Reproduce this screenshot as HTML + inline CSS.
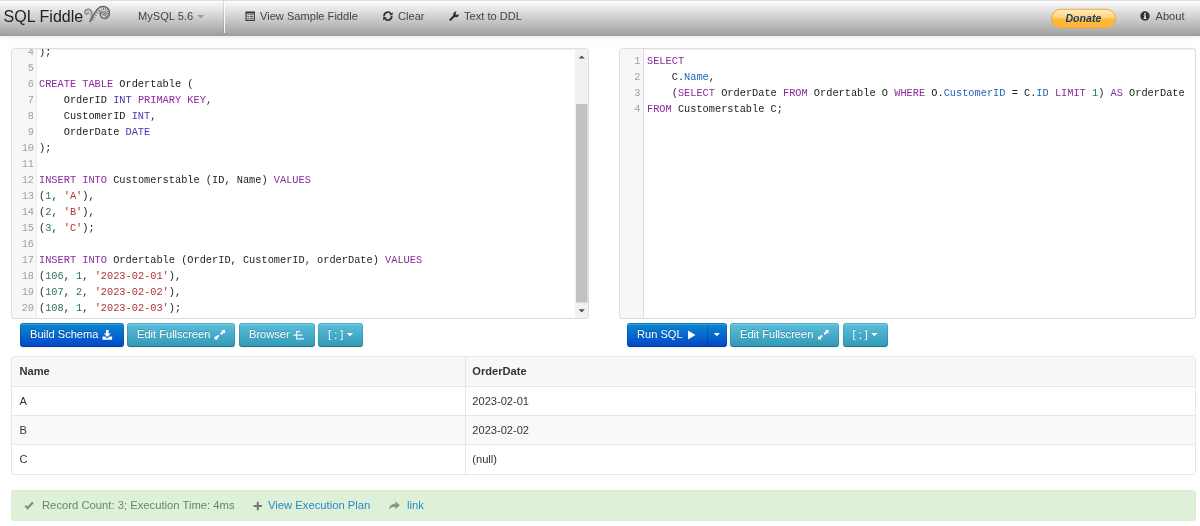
<!DOCTYPE html>
<html><head><meta charset="utf-8"><title>SQL Fiddle</title>
<style>
*{box-sizing:border-box}
html,body{margin:0;padding:0}
body{width:1200px;height:526px;overflow:hidden;background:#fff;font-family:"Liberation Sans",Arial,sans-serif;font-size:11.1px;color:#333;position:relative}
.abs{position:absolute}
svg{position:absolute;overflow:visible}
#nav{left:0;top:0;width:1200px;height:36px;background:linear-gradient(#fdfdfd 0,#f4f4f4 8%,#a8a8a8 90%,#9e9e9e 96%,#9e9e9e 100%);box-shadow:0 1px 6px rgba(0,0,0,.10);border-top:1px solid #dedede}
#nav .t{position:absolute;top:0;line-height:31px;color:#444;font-size:11.1px;white-space:nowrap}
#brand{left:3.600px;font-size:16.050px !important;color:#222 !important;line-height:31px !important}
.div{position:absolute;left:222.5px;top:0;width:2px;height:32px;border-left:1px solid rgba(0,0,0,.10);border-right:1px solid rgba(255,255,255,.9)}
.ed{border:1px solid #ddd;border-radius:3px;background:#fff;overflow:hidden;box-shadow:inset 0 1px 1px rgba(0,0,0,.05)}
.gut{position:absolute;left:0;top:0;bottom:0;width:24.5px;background:#f7f7f7;border-right:1px solid #ececec}
.code{position:absolute;font-family:"Liberation Mono",monospace;font-size:10.3px;line-height:16px;white-space:pre;color:#1c1c1c;margin:0}
.ln{color:#a0a0a0;text-align:right}
.k{color:#8a2a9c}.n{color:#2a7558}.s{color:#b03232}.b{color:#4436b4}.v{color:#1f66b4}
.btn{position:absolute;top:322.5px;height:24px;border-radius:3px;color:#fff;font-size:11.1px;line-height:22px;white-space:nowrap;border:1px solid rgba(0,0,0,.1);border-bottom-color:rgba(0,0,0,.25);text-shadow:0 -1px 0 rgba(0,0,0,.25);box-shadow:inset 0 1px 0 rgba(255,255,255,.2),0 1px 2px rgba(0,0,0,.05);background-origin:border-box}
.btn span{position:absolute;top:-1px}
.pri{background-image:linear-gradient(#0a8ad0,#0446c8)}
.inf{background-image:linear-gradient(#5bc0de,#3198b6)}
.row{position:absolute;left:0;width:100%;line-height:29px}
.row span{position:absolute;top:0}
#wrap{position:absolute;left:0;top:0;width:1200px;height:526px;will-change:transform}
</style></head><body><div id="wrap">
<div id="nav" class="abs">
 <div id="brand" class="t">SQL Fiddle</div>
 <div class="t" style="left:138px">MySQL 5.6</div>
 <div class="div"></div>
 <div class="t" style="left:260px">View Sample Fiddle</div>
 <div class="t" style="left:398px">Clear</div>
 <div class="t" style="left:464px">Text to DDL</div>
 <div class="t" style="left:1155.5px">About</div>
</div>

<div class="abs ed" style="left:11px;top:48px;width:578px;height:271px">
 <div class="gut"></div>
 <pre class="code ln" style="left:0;top:-5px;width:22px">4
5
6
7
8
9
10
11
12
13
14
15
16
17
18
19
20</pre>
 <pre class="code" style="left:27px;top:-5px">);

<span class="k">CREATE TABLE</span> Ordertable (
    OrderID <span class="b">INT</span> <span class="k">PRIMARY KEY</span>,
    CustomerID <span class="b">INT</span>,
    OrderDate <span class="b">DATE</span>
);

<span class="k">INSERT INTO</span> Customerstable (ID, Name) <span class="k">VALUES</span>
(<span class="n">1</span>, <span class="s">'A'</span>),
(<span class="n">2</span>, <span class="s">'B'</span>),
(<span class="n">3</span>, <span class="s">'C'</span>);

<span class="k">INSERT INTO</span> Ordertable (OrderID, CustomerID, orderDate) <span class="k">VALUES</span>
(<span class="n">106</span>, <span class="n">1</span>, <span class="s">'2023-02-01'</span>),
(<span class="n">107</span>, <span class="n">2</span>, <span class="s">'2023-02-02'</span>),
(<span class="n">108</span>, <span class="n">1</span>, <span class="s">'2023-02-03'</span>);</pre>
</div>

<div class="abs ed" style="left:619px;top:48px;width:577px;height:271px">
 <div class="gut" style="width:23.500px;border-right-color:#dedede"></div>
 <pre class="code ln" style="left:0;top:4px;width:20.5px">1
2
3
4</pre>
 <pre class="code" style="left:27px;top:4px"><span class="k">SELECT</span>
    C.<span class="v">Name</span>,
    (<span class="k">SELECT</span> OrderDate <span class="k">FROM</span> Ordertable O <span class="k">WHERE</span> O.<span class="v">CustomerID</span> = C.<span class="v">ID</span> <span class="k">LIMIT</span> <span class="n">1</span>) <span class="k">AS</span> OrderDate
<span class="k">FROM</span> Customerstable C;</pre>
</div>

<div class="btn pri" style="left:20px;width:103.5px"><span style="left:9px">Build Schema</span></div>
<div class="btn inf" style="left:127px;width:108px"><span style="left:9px">Edit Fullscreen</span></div>
<div class="btn inf" style="left:239px;width:75.5px"><span style="left:9px">Browser</span></div>
<div class="btn inf" style="left:318px;width:45px"><span style="left:9px">[ ; ]</span></div>
<div class="btn pri" style="left:627px;width:100px"><span style="left:9px">Run SQL</span><i class="abs" style="left:79px;top:0;width:1px;height:22px;background:rgba(0,0,0,.18)"></i></div>
<div class="btn inf" style="left:730px;width:108.500px"><span style="left:9px">Edit Fullscreen</span></div>
<div class="btn inf" style="left:842.5px;width:45px"><span style="left:9px">[ ; ]</span></div>

<div class="abs" style="left:11px;top:356px;width:1184.5px;height:118.5px;border:1px solid #e7e7e7;border-radius:3px;overflow:hidden">
 <div class="row" style="top:0;height:29.5px;background:#f8f8f8;border-bottom:1px solid #e7e7e7;font-weight:bold;line-height:29px"><span style="left:7.5px">Name</span><span style="left:460.3px">OrderDate</span></div>
 <div class="row" style="top:29.5px;height:29px;border-bottom:1px solid #e7e7e7;line-height:28px"><span style="left:7.5px">A</span><span style="left:460.3px">2023-02-01</span></div>
 <div class="row" style="top:58.5px;height:29.5px;background:#f9f9f9;border-bottom:1px solid #e7e7e7;line-height:28px"><span style="left:7.5px">B</span><span style="left:460.3px">2023-02-02</span></div>
 <div class="row" style="top:88px;height:29px;line-height:28px"><span style="left:7.5px">C</span><span style="left:460.3px">(null)</span></div>
 <div class="abs" style="left:452.5px;top:0;width:1px;height:120px;background:#e7e7e7"></div>
</div>

<div class="abs" style="left:11px;top:490px;width:1184.5px;height:31px;background:#dff0d8;border:1px solid #d9ecd0;border-radius:3px;color:#628a64;line-height:28px;font-size:11.25px">
 <span class="abs" style="left:30px">Record Count: 3; Execution Time: 4ms</span>
 <span class="abs" style="left:256px;color:#2a88c8">View Execution Plan</span>
 <span class="abs" style="left:395px;color:#2a88c8">link</span>
</div>

<svg class="abs" style="left:0;top:0" width="1200" height="526" viewBox="0 0 1200 526">
 <!-- logo -->
 <g fill="none" stroke-linecap="round">
  <path d="M90.3 21.2C91.6 17.5 92.8 13.6 91 10.9C89.2 8.5 85.2 9.3 85.1 12.1C85 14.3 87.6 14.7 88.3 13" stroke="#9a9a9a" stroke-width="2.3"/>
  <path d="M90.2 21.6C92.5 16.5 95.3 10.6 99.3 7.7C103.8 4.6 109.5 7.7 109.5 12.9C109.5 16.9 106.3 18.9 103.8 18.4C100.4 17.8 99.3 14.2 101.2 12" stroke="#666" stroke-width="1.450"/>
  <path d="M91.6 18.9l2.3 1.1M92.8 16.6l2.3 1.1M94.1 14.3l2.3 1.1M95.6 12.1l2.3 1.1M97.3 10.1l2.3 1.1M101.2 12.9L99.2 13.0M101.4 11.4L99.6 10.6M102.3 10.3L101.1 8.7M103.6 9.7L103.2 7.7M105.1 9.7L105.7 7.8M106.3 10.5L107.7 9.1M107.1 11.7L109.0 11.1M107.1 13.2L109.1 13.6M106.5 14.5L108.1 15.7M105.4 15.4L106.2 17.2" stroke="#6c6c6c" stroke-width=".950"/>
  <circle cx="104.300" cy="13.300" r="2.600" fill="#979797" stroke="none"/>
 </g>
 <!-- nav caret -->
 <path d="M197.6 15h6.4l-3.2 3.4z" fill="#999"/>
 <!-- list-alt -->
 <g>
  <rect x="246.1" y="12.6" width="8.2" height="7.8" fill="none" stroke="#333" stroke-width="1.1"/>
  <rect x="245.6" y="11.5" width="9.2" height="1.8" fill="#333"/>
  <path d="M247.6 14.6h1.2M249.8 14.6h3M247.6 16.5h1.2M249.8 16.5h3M247.6 18.4h1.2M249.8 18.4h3" stroke="#444" stroke-width=".9"/>
 </g>
 <!-- refresh -->
 <g fill="none" stroke="#333" stroke-width="1.700">
  <path d="M384.100 16.300A3.750 3.750 0 0 1 391 13.900"/>
  <path d="M391.700 16A3.750 3.750 0 0 1 384.800 18.300"/>
 </g>
 <path d="M392.600 11.900v3.400h-3.400zM383.200 20.400v-3.400h3.400z" fill="#333"/>
 <!-- wrench -->
 <g>
  <path d="M450.4 19.8L455.2 15" stroke="#333" stroke-width="2.3" stroke-linecap="round" fill="none"/>
  <path d="M456.6 11.5A2.9 2.9 0 1 0 458.9 14.3L456.9 15.1L455.4 13.6Z" fill="#333"/>
 </g>
 <!-- donate -->
 <defs>
  <linearGradient id="dg" x1="0" y1="0" x2="0" y2="1">
   <stop offset="0" stop-color="#fff0c4"/><stop offset=".45" stop-color="#ffd47a"/><stop offset=".55" stop-color="#ffba3a"/><stop offset="1" stop-color="#ffb53a"/>
  </linearGradient>
 </defs>
 <rect x="1051.5" y="9.3" width="64" height="18.4" rx="9.2" fill="url(#dg)" stroke="#f5a33a" stroke-width="1"/>
 <text x="1083.400" y="21.900" text-anchor="middle" font-family="Liberation Sans, Arial, sans-serif" font-size="10.6" font-weight="bold" font-style="italic" fill="#1d3b66">Donate</text>
 <!-- info -->
 <circle cx="1145" cy="16" r="4.7" fill="#333"/>
 <path d="M1144.1 13h1.8v1.4h-1.8zM1143.7 15.2h2.2v3h.6v.9h-3v-.9h.7v-2.1h-.5z" fill="#e8e8e8"/>
 <!-- download -->
 <path d="M106 330h2.6v3.6h2.2l-3.5 3.4l-3.5-3.4h2.2zM102.5 336.6h2.6l2.2 2l2.2-2h2.6v3.1h-9.6z" fill="#fff"/>
 <!-- fullscreen L -->
 <g><path d="M225.100 329.900v3.600l-1.100-1.100l-2.600 2.600l-1.400-1.400l2.600-2.600l-1.100-1.100zM214.600 339.500v-3.600l1.100 1.100l2.300-2.300l1.400 1.400l-2.300 2.300l1.100 1.100z" fill="#fff"/></g>
 <g transform="translate(603.500 0)"><path d="M225.100 329.900v3.600l-1.100-1.100l-2.600 2.600l-1.400-1.400l2.600-2.600l-1.100-1.100zM214.600 339.500v-3.600l1.100 1.100l2.300-2.300l1.400 1.400l-2.300 2.300l1.100 1.100z" fill="#fff"/></g>
 <!-- browser icon -->
 <g stroke="#fff" fill="none" opacity=".92">
  <path d="M296.6 331v8.6" stroke-width="1.1"/>
  <path d="M293.4 335.1h3" stroke-width="1.3"/>
  <path d="M297 331.6h3M297 335.1h5.6M297 338.9h7" stroke-width="1.3"/>
 </g>
 <!-- carets -->
 <path d="M346.8 333h6.2l-3.1 3.2z" fill="#fff"/>
 <path d="M871.3 333h6.2l-3.1 3.2z" fill="#fff"/>
 <path d="M713.7 333h6.2l-3.1 3.2z" fill="#fff"/>
 <!-- play -->
 <path d="M688 330.4l7.5 4.5l-7.5 4.5z" fill="#fff"/>
 <!-- alert icons -->
 <path d="M25.3 505.600l2.300 2.500l5.300-5.500" fill="none" stroke="#7f8f7f" stroke-width="2.100"/>
 <path d="M256.8 501.8h2v3.2h3.2v2h-3.2v3.2h-2v-3.2h-3.2v-2h3.2z" fill="#707870"/>
 <path d="M395.2 501.6l4.8 3.7l-4.8 3.7v-2.2c-3-.1-4.700 1-6 3c.2-3.500 2-5.800 6-6z" fill="#8a938a"/>
 <!-- scrollbar -->
 <rect x="574.800" y="49" width="13.200" height="269" fill="#f1f1f1"/>
 <rect x="576" y="104" width="11.500" height="198.500" fill="#c1c1c1"/>
 <path d="M578.6 58.600l3.100-3.200l3.100 3.200z" fill="#505050"/>
 <path d="M578.6 309.200l3.100 3.200l3.100-3.200z" fill="#505050"/>
</svg>
</div></body></html>
